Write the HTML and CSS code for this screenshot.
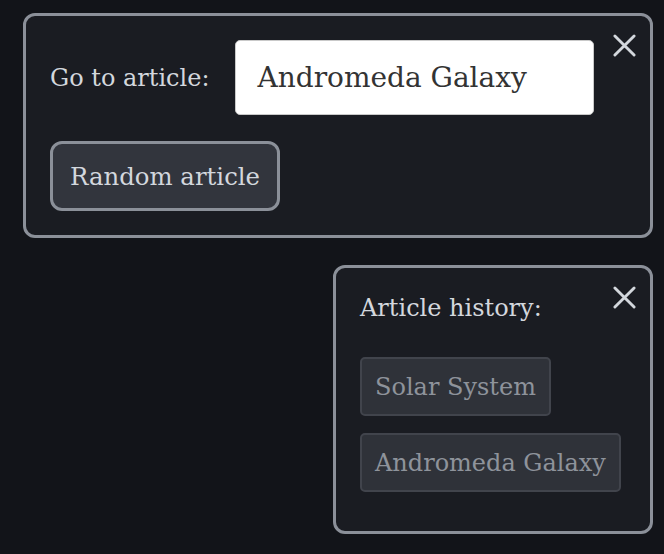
FILE: index.html
```html
<!DOCTYPE html>
<html>
<head>
<meta charset="utf-8">
<link rel="stylesheet" href="styles.css">
</head>
<body>
<div class="wrap">
  <section class="panel panel-go">
    <button class="close" aria-label="Close">
      <svg viewBox="0 0 24 24" width="23" height="23"><path d="M2 2 L22 22 M22 2 L2 22" stroke="currentColor" stroke-width="3" stroke-linecap="round" fill="none"/></svg>
    </button>
    <div class="row">
      <label class="label">Go to article:</label>
      <div class="input">Andromeda Galaxy</div>
    </div>
    <button class="btn">Random article</button>
  </section>
  <section class="panel panel-hist">
    <button class="close" aria-label="Close">
      <svg viewBox="0 0 24 24" width="23" height="23"><path d="M2 2 L22 22 M22 2 L2 22" stroke="currentColor" stroke-width="3" stroke-linecap="round" fill="none"/></svg>
    </button>
    <div class="label hist-title">Article history:</div>
    <div class="tags">
      <span class="tag">Solar System</span>
      <span class="tag">Andromeda Galaxy</span>
    </div>
  </section>
</div>
</body>
</html>
```
FILE: styles.css
```css
html, body {
  margin: 0;
  padding: 0;
  background: #121419;
  height: 100%;
}
body {
  font-family: "DejaVu Serif", "Liberation Serif", serif;
  color: #d3d7dd;
}
.wrap {
  display: flex;
  flex-direction: column;
  align-items: flex-end;
  gap: 27px;
  padding: 13px 11px 0 23px;
}
.panel {
  position: relative;
  box-sizing: border-box;
  background: #1a1c22;
  border: 3px solid #8b9099;
  border-radius: 12px;
}
.panel-go {
  width: 630px;
  height: 225px;
  padding: 24px 24px;
  display: flex;
  flex-direction: column;
  align-items: flex-start;
  gap: 26px;
}
.close {
  position: absolute;
  top: 18px;
  right: 14px;
  width: 23px;
  height: 23px;
  padding: 0;
  border: 0;
  background: none;
  color: #d3d7dd;
  display: flex;
}
.row {
  display: flex;
  align-items: center;
  gap: 26px;
}
.label {
  font-size: 24px;
  color: #d3d7dd;
}
.input {
  box-sizing: border-box;
  width: 359px;
  height: 75px;
  background: #ffffff;
  border: 1px solid #c9c9c9;
  border-radius: 5px;
  padding: 0 21px;
  display: flex;
  align-items: center;
  font-size: 28px;
  color: #333333;
}
.btn {
  box-sizing: border-box;
  height: 70px;
  padding: 0 17px;
  background: #32353d;
  border: 3px solid #8b9099;
  border-radius: 12px;
  font-family: inherit;
  font-size: 24.4px;
  color: #d3d7dd;
}
.panel-hist {
  width: 320px;
  height: 269px;
  padding: 24px 24px;
}
.hist-title {
  margin-top: 2px;
}
.tags {
  margin-top: 35px;
  display: flex;
  flex-direction: column;
  align-items: flex-start;
  gap: 17px;
}
.tag {
  box-sizing: border-box;
  height: 59px;
  display: flex;
  align-items: center;
  padding: 0 13px;
  background: #2f3239;
  border: 2px solid #41444c;
  border-radius: 5px;
  font-size: 24px;
  color: #8e939b;
}
```
